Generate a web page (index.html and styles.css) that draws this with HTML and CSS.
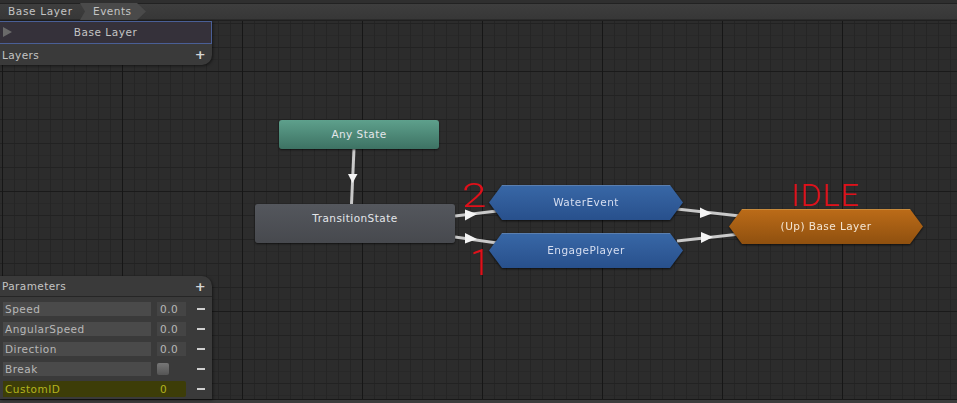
FILE: index.html
```html
<!DOCTYPE html>
<html lang="en">
<head>
<meta charset="utf-8">
<title>Animator</title>
<link rel="stylesheet" href="styles.css">
</head>
<body>
<div class="app">
  <header class="toolbar">
    <nav class="crumbs">
      <span class="crumb">Base Layer</span>
      <span class="crumb crumb-active">Events</span>
    </nav>
  </header>
  <main class="canvas">
    <svg class="wires" width="957" height="378" viewBox="0 21 957 378" aria-hidden="true">
      <g class="wire">
        <line x1="354" y1="149" x2="351.5" y2="204"/>
        <line x1="455" y1="216" x2="497" y2="211"/>
        <line x1="455" y1="237" x2="497" y2="243"/>
        <line x1="677" y1="209" x2="740" y2="216"/>
        <line x1="677" y1="241" x2="740" y2="234"/>
      </g>
      <g class="arrow">
        <polygon points="348,174 357.5,174 352.5,183"/>
        <polygon points="465,209.500 465,220.500 477,214"/>
        <polygon points="465,233 465,243.500 477,239"/>
        <polygon points="700,207.500 700,218 712,213.500"/>
        <polygon points="701,232 701,243 713,237"/>
      </g>
    </svg>

    <div class="node rect any-state">Any State</div>
    <div class="node rect transition-state">TransitionState</div>
    <div class="hex-wrap water"><div class="node hex blue">WaterEvent</div></div>
    <div class="hex-wrap engage"><div class="node hex blue">EngagePlayer</div></div>
    <div class="hex-wrap up"><div class="node hex orange">(Up) Base Layer</div></div>

    <span class="scribble s-two">2</span>
    <span class="scribble s-one">1</span>
    <span class="scribble s-idle">IDLE</span>

    <aside class="sidebar">
      <section class="panel layers">
        <div class="layer-row">
          <svg class="play" width="9" height="10" viewBox="0 0 9 10" aria-hidden="true"><polygon points="0,0 9,5 0,10"/></svg>
          <span>Base Layer</span>
        </div>
        <div class="panel-head"><span>Layers</span><span class="plus">+</span></div>
      </section>
      <section class="panel params">
        <div class="panel-head head-line"><span>Parameters</span><span class="plus">+</span></div>
        <div class="param"><span class="field name">Speed</span><span class="field val">0.0</span><span class="minus"></span></div>
        <div class="param"><span class="field name">AngularSpeed</span><span class="field val">0.0</span><span class="minus"></span></div>
        <div class="param"><span class="field name">Direction</span><span class="field val">0.0</span><span class="minus"></span></div>
        <div class="param"><span class="field name">Break</span><span class="check-cell"><span class="check"></span></span><span class="minus"></span></div>
        <div class="param hot"><span class="field name">CustomID</span><span class="field val">0</span><span class="minus"></span></div>
      </section>
    </aside>
  </main>
  <footer class="bottom"></footer>
</div>
</body>
</html>
```
FILE: styles.css
```css
* { box-sizing: border-box; }
html, body { margin: 0; height: 100%; }
body {
  background: #2a2a2a;
  font-family: "DejaVu Sans", sans-serif;
  font-size: 10.5px;
  color: #c4c4c4;
  overflow: hidden;
}
.app {
  width: 957px;
  height: 403px;
  display: flex;
  flex-direction: column;
}

/* toolbar */
.toolbar {
  height: 21px;
  flex: none;
  padding-top: 3px;
  background: linear-gradient(#2f2f2f 0 3px, #222 3px 4px, #3e3e3e 4px, #373737 19px, #1f1f1f 20px);
}
.crumbs { display: flex; height: 17px; }
.crumb {
  display: flex;
  align-items: center;
  padding: 0 0 1px 8px;
  width: 80px;
  letter-spacing: 0.65px;
}
.crumb-active {
  width: 66px;
  padding-left: 13px;
  letter-spacing: 0.5px;
  background: #4a4a4a;
  clip-path: polygon(0 0, 57px 0, 100% 50%, 57px 100%, 0 100%, 5px 50%);
}

/* canvas */
.canvas {
  position: relative;
  flex: 1;
  min-height: 0;
  background-color: #2c2c2c;
  background-image:
    linear-gradient(90deg, #161616 1px, transparent 1px),
    linear-gradient(#1a1a1a 1px, transparent 1px),
    linear-gradient(#222 1px, transparent 1px),
    linear-gradient(90deg, #252525 1px, transparent 1px),
    linear-gradient(#282828 1px, transparent 1px);
  background-size: 120px 120px, 120px 120px, 24px 24px, 12px 12px, 12px 12px;
  background-position: 2px 0, 0 50px, 0 2px, 2px 0, 0 2px;
}
.wires { position: absolute; left: 0; top: 0; }
.wire line { stroke: #c9c9c9; stroke-width: 3; }
.arrow polygon { fill: #f4f4f4; }

/* nodes */
.node {
  display: flex;
  justify-content: center;
  color: #e4e6ea;
  letter-spacing: 0.45px;
}
.rect {
  position: absolute;
  border-radius: 3px;
  box-shadow: 0 1px 2px rgba(0, 0, 0, 0.6);
}
.any-state {
  left: 279px;
  top: 99px;
  width: 160px;
  height: 29px;
  padding-top: 8px;
  background: linear-gradient(#5ea08c, #3d7263);
}
.transition-state {
  left: 255px;
  top: 183px;
  width: 200px;
  height: 39px;
  padding-top: 8px;
  background: linear-gradient(#54575d, #47494e);
}
.hex-wrap {
  position: absolute;
  width: 194px;
  height: 35px;
  filter: drop-shadow(0 1px 1px rgba(0, 0, 0, 0.7));
}
.water { left: 489px; top: 164px; }
.engage { left: 489px; top: 212px; }
.up { left: 729px; top: 188px; }
.hex {
  width: 100%;
  height: 100%;
  align-items: center;
  padding-bottom: 2px;
  clip-path: polygon(13px 0, 181px 0, 100% 50%, 181px 100%, 13px 100%, 0 50%);
}
.blue { background: linear-gradient(#5a7fb0 0 1px, #3867a6 1px, #28508c); color: #d6def0; }
.orange { background: linear-gradient(#c88a3c 0 1px, #bb6b18 1px, #8f500f); color: #f4e6d4; }

/* red annotations */
.scribble {
  position: absolute;
  color: #e0101a;
  font-family: "Roboto", sans-serif;
  font-weight: 300;
  line-height: 1;
  transform-origin: 0 0;
}
.s-two { left: 462px; top: 157px; font-size: 34px; transform: scaleX(1.3); }
.s-one { left: 470px; top: 224px; font-size: 36px; }
.s-idle { left: 791px; top: 158px; font-size: 32px; letter-spacing: 1px; }

/* sidebar */
.sidebar {
  position: absolute;
  left: 0;
  top: 0;
  bottom: 0;
  width: 212px;
  display: flex;
  flex-direction: column;
  justify-content: space-between;
}
.panel {
  background: #3a3a3a;
  box-shadow: 1px 1px 3px rgba(0, 0, 0, 0.5);
}
.layers { border-bottom-right-radius: 10px; height: 44px; }
.params { border-top-right-radius: 10px; height: 123px; }
.layer-row {
  position: relative;
  height: 23px;
  display: flex;
  align-items: center;
  justify-content: center;
  padding-bottom: 2px;
  background: #35313a;
  border: 1px solid #4a5f96;
  border-left: 0;
  letter-spacing: 0.55px;
}
.play { position: absolute; left: 3px; top: 5px; fill: #6a6a6a; }
.panel-head {
  height: 21px;
  padding: 0 6px 0 2px;
  display: flex;
  align-items: center;
  justify-content: space-between;
  letter-spacing: 0.4px;
}
.head-line { border-bottom: 1px solid #262626; }
.plus { font-weight: bold; font-size: 13px; color: #d6d6d6; line-height: 1; }

.param {
  display: grid;
  grid-template-columns: 148px 29px 19px;
  column-gap: 6px;
  align-items: center;
  height: 20px;
  padding-left: 3px;
}
.params .head-line + .param { margin-top: 2px; }
.field {
  height: 14px;
  padding-left: 2px;
  display: flex;
  align-items: center;
  background: #4a4a4a;
  letter-spacing: 0.5px;
  color: #b8b8b8;
}
.val { padding-left: 3px; background: #444; }
.minus {
  width: 8px;
  height: 2px;
  margin-left: 5px;
  background: #d0d0d0;
}
.check-cell { display: flex; }
.check {
  width: 12px;
  height: 12px;
  border-radius: 2px;
  background: linear-gradient(#777, #555);
}
.hot { column-gap: 0; grid-template-columns: 154px 29px 25px; }
.hot .name, .hot .val {
  height: 16px;
  background: #3d3d08;
  color: #b4b41e;
}
.hot .val { padding-left: 3px; border-radius: 0 2px 2px 0; }
.hot .minus { margin-left: 11px; }

.bottom {
  flex: none;
  height: 4px;
  background: #3c3c3c;
  border-top: 1px solid #181818;
}
```
